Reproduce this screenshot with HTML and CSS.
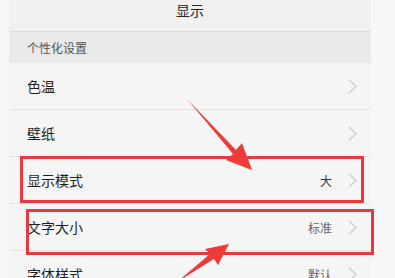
FILE: index.html
```html
<!DOCTYPE html>
<html lang="zh-CN">
<head>
<meta charset="utf-8">
<link rel="stylesheet" href="styles.css">
</head>
<body>
<div class="page">
  <div class="panel">
    <div class="titlebar">显示</div>
    <div class="section">个性化设置</div>
    <div class="row"><span class="label">色温</span><span class="right"><svg class="chev" viewBox="0 0 9 15"><polyline points="1,1 8,7.5 1,14"/></svg></span></div>
    <div class="row"><span class="label">壁纸</span><span class="right"><svg class="chev" viewBox="0 0 9 15"><polyline points="1,1 8,7.5 1,14"/></svg></span></div>
    <div class="row"><span class="label">显示模式</span><span class="right"><span class="value dark">大</span><svg class="chev" viewBox="0 0 9 15"><polyline points="1,1 8,7.5 1,14"/></svg></span></div>
    <div class="row"><span class="label">文字大小</span><span class="right"><span class="value">标准</span><svg class="chev" viewBox="0 0 9 15"><polyline points="1,1 8,7.5 1,14"/></svg></span></div>
    <div class="row"><span class="label">字体样式</span><span class="right"><span class="value">默认</span><svg class="chev" viewBox="0 0 9 15"><polyline points="1,1 8,7.5 1,14"/></svg></span></div>
  </div>
  <div class="box box1"></div>
  <div class="box box2"></div>
  <svg class="arrows" viewBox="0 0 395 278" width="395" height="278">
    <polygon points="187,99 236,150 242,143 252,170 226,160 233,154"/>
    <polygon points="177,282 210,254 205,249 229,244 218,265 214,259"/>
  </svg>
</div>
</body>
</html>
```

FILE: styles.css
```css
html, body {
  margin: 0;
  padding: 0;
}
body {
  background: #f7f7f7;
  font-family: "Noto Sans CJK SC", "Noto Sans", sans-serif;
  overflow: hidden;
}
.page {
  position: relative;
  width: 395px;
  height: 278px;
  overflow: hidden;
}
.panel {
  margin-left: 9px;
  width: 362px;
  background: #f4f4f4;
}
.titlebar {
  height: 32px;
  box-sizing: border-box;
  padding-top: 0;
  line-height: 20px;
  text-align: center;
  font-size: 14px;
  color: #222;
  background: #f1f1f1;
  border-bottom: 1px solid #dcdcdc;
}
.section {
  height: 31px;
  display: flex;
  align-items: center;
  padding-left: 18px;
  font-size: 12px;
  color: #555;
  background: #e9e9e9;
}
.row {
  height: 47px;
  box-sizing: border-box;
  display: flex;
  align-items: center;
  justify-content: space-between;
  padding-left: 18px;
  padding-right: 14px;
  border-bottom: 1px solid #e2e2e2;
  background: #f5f5f5;
}
.label {
  font-size: 14px;
  color: #1e1e1e;
}
.right {
  display: flex;
  align-items: center;
  gap: 16px;
}
.value {
  font-size: 12px;
  color: #666;
}
.value.dark {
  color: #333;
}
.chev {
  width: 9px;
  height: 15px;
  fill: none;
  stroke: #c9c9c9;
  stroke-width: 1.2;
}
.box {
  position: absolute;
  border: 3px solid #e8393f;
  box-sizing: border-box;
}
.box1 {
  left: 20px;
  top: 156px;
  width: 344px;
  height: 47px;
}
.box2 {
  left: 26px;
  top: 209px;
  width: 348px;
  height: 46px;
}
.arrows {
  position: absolute;
  left: 0;
  top: 0;
}
.arrows polygon {
  fill: #f03a3a;
}
```
